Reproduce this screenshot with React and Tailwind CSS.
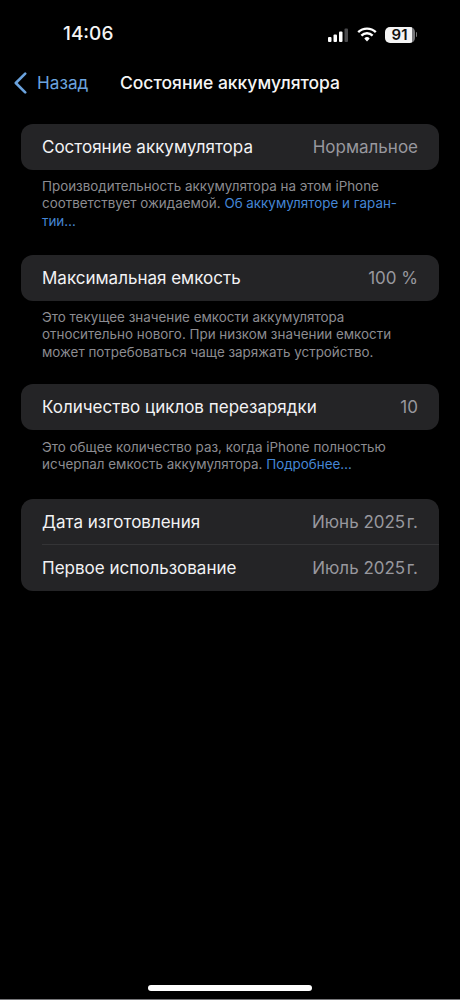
function Row({ label, value, divider }) {
    return (
        <div className="pl-[21px]">
            <div className={`flex h-[46px] items-center justify-between pr-[21px] pt-[2px] ${divider ? "border-b border-[#343436]" : ""}`}>
                <span className="text-[17px] text-[#f2f2f4]">{label}</span>
                <span className="text-[17px] text-[#98989e]">{value}</span>
            </div>
        </div>
    )
}

function Card({ children }) {
    return <div className="mx-[21px] rounded-[12px] bg-[#242426]">{children}</div>
}

function Note({ children, className }) {
    return <p className={`mx-[42px] text-[13.4px] leading-[17.3px] text-[#8c8c91] ${className}`}>{children}</p>
}

function StatusBar() {
    return (
        <div className="flex h-[68px] items-center justify-between pl-[63px] pr-[43px] pt-[1px]">
            <span className="text-[19px] font-medium text-[#f5f5f5]">14:06</span>
            <div className="flex items-center gap-[7px]">
                <svg width="24" height="14" viewBox="0 0 24 14">
                    <rect x="2" y="9" width="3.5" height="5" rx="1" fill="#fff" />
                    <rect x="7.5" y="6.5" width="3.5" height="7.5" rx="1" fill="#fff" />
                    <rect x="13" y="3.5" width="3.5" height="10.5" rx="1" fill="#fff" />
                    <rect x="18.5" y="0.5" width="3.5" height="13.5" rx="1" fill="#4a4a4c" />
                </svg>
                <svg width="20" height="15" viewBox="0 0 20 15" fill="none" stroke="#fff" strokeWidth="2.4">
                    <path d="M1.2 5.2a12.6 12.6 0 0 1 17.6 0" />
                    <path d="M4.4 8.6a8 8 0 0 1 11.2 0" />
                    <path d="M10 14.4 7.3 11.4a3.8 3.8 0 0 1 5.4 0Z" fill="#fff" stroke="none" />
                </svg>
                <div className="ml-[1px] flex items-center gap-[1px]">
                    <div className="flex h-[16px] w-[30px] items-center justify-center rounded-[5px] bg-[linear-gradient(90deg,#f4f4f4_91%,#77777a_91%)] text-[15px] font-semibold leading-none text-[#111]">91</div>
                    <div className="h-[5px] w-[1.5px] rounded-r-full bg-[#777]" />
                </div>
            </div>
        </div>
    )
}

export default function App() {
    return (
        <div className="flex h-[1000px] flex-col bg-black font-['Inter',sans-serif]">
            <StatusBar />
            <div className="relative flex h-[30px] items-center justify-center">
                <div className="absolute left-[14px] flex items-center gap-[10px] text-[#6ba3de]">
                    <svg width="13" height="22" viewBox="0 0 13 22" fill="none" stroke="currentColor" strokeWidth="2.6" strokeLinecap="round" strokeLinejoin="round">
                        <path d="M11.2 1.6 1.8 11l9.4 9.4" />
                    </svg>
                    <span className="text-[17.2px]">Назад</span>
                </div>
                <span className="text-[17.5px] font-medium text-[#f5f5f5]">Состояние аккумулятора</span>
            </div>

            <div className="mt-[26px]">
                <Card><Row label="Состояние аккумулятора" value="Нормальное" /></Card>
                <Note className="mt-[8px] h-[53px]">
                    Производительность аккумулятора на этом iPhone соответствует ожидаемой. <span className="text-[#4586d6]">Об аккумуляторе и гаран-<br />тии…</span>
                </Note>
            </div>

            <div className="mt-[24px]">
                <Card><Row label="Максимальная емкость" value="100 %" /></Card>
                <Note className="mt-[8px] h-[53px]">
                    Это текущее значение емкости аккумулятора относительно нового. При низком значении емкости может потребоваться чаще заряжать устройство.
                </Note>
            </div>

            <div className="mt-[22px]">
                <Card><Row label="Количество циклов перезарядки" value="10" /></Card>
                <Note className="mt-[9px] h-[35px]">
                    Это общее количество раз, когда iPhone полностью исчерпал емкость аккумулятора. <span className="text-[#4586d6]">Подробнее…</span>
                </Note>
            </div>

            <div className="mt-[25px]">
                <Card>
                    <Row label="Дата изготовления" value={"Июнь 2025\u200Aг."} divider />
                    <Row label="Первое использование" value={"Июль 2025\u200Aг."} />
                </Card>
            </div>

            <div className="mt-auto flex justify-center pb-[8px]">
                <div className="h-[6px] w-[164px] rounded-full bg-white" />
            </div>
            <div className="h-[1px] bg-[#77777a]" />
        </div>
    )
}
